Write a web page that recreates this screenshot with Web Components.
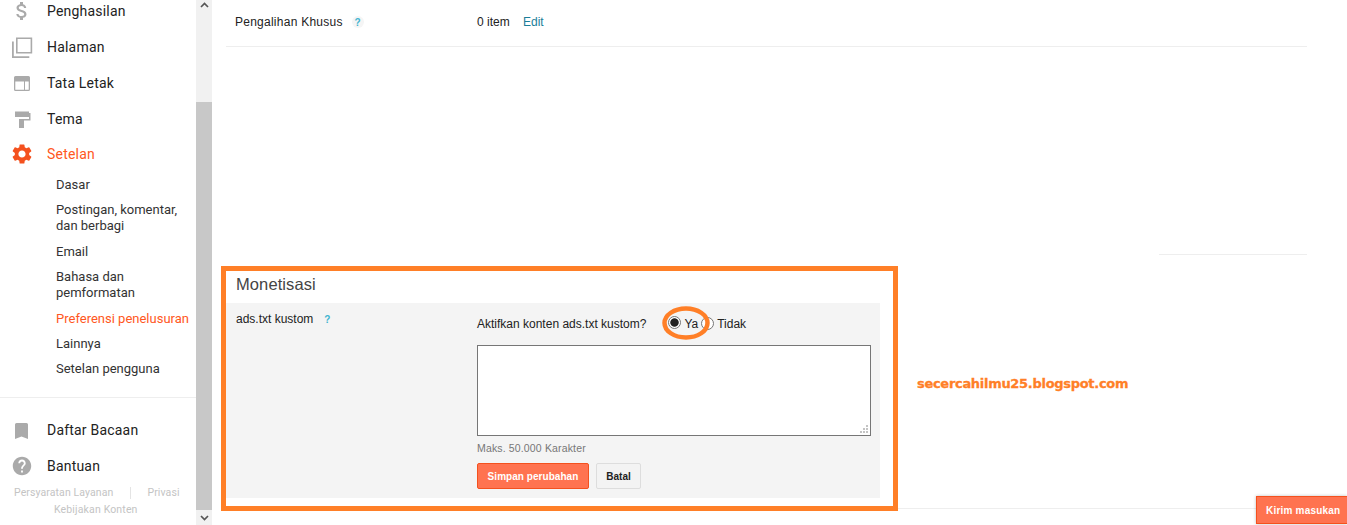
<!DOCTYPE html>
<html lang="id">
<head>
<meta charset="UTF-8">
<title>Setelan - Monetisasi</title>
<style>
    html, body { margin: 0; padding: 0; background: #fff; }
    body { height: 525px; overflow: hidden; position: relative; }
</style>
</head>
<body>
<blog-page>
    <side-nav slot="side">
        <nav-item label="Penghasilan"><svg viewBox="0 0 24 24"><path fill="#aaa" d="M11.8 10.9c-2.27-.59-3-1.2-3-2.15 0-1.09 1.01-1.85 2.7-1.85 1.78 0 2.44.85 2.5 2.1h2.21c-.07-1.72-1.12-3.3-3.21-3.81V3h-3v2.16c-1.94.42-3.5 1.68-3.5 3.61 0 2.31 1.91 3.46 4.7 4.13 2.5.6 3 1.48 3 2.41 0 .69-.49 1.79-2.7 1.79-2.06 0-2.87-.92-2.98-2.1h-2.2c.12 2.19 1.76 3.42 3.68 3.83V21h3v-2.15c1.95-.37 3.5-1.5 3.5-3.55 0-2.84-2.43-3.81-4.7-4.4z"/></svg></nav-item>
        <nav-item label="Halaman"><svg viewBox="0 0 24 24"><path fill="none" stroke="#aaa" stroke-width="1.6" d="M6.8 3.3h14.6v14.4H6.8z"/><path fill="none" stroke="#aaa" stroke-width="1.8" d="M2.9 6.500v15.700h16.400"/></svg></nav-item>
        <nav-item label="Tata Letak"><svg viewBox="0 0 24 24"><path fill="#aaa" d="M5.500 5h13a1.500 1.500 0 0 1 1.500 1.500v12a1.500 1.500 0 0 1-1.500 1.500h-13A1.500 1.500 0 0 1 4 18.500v-12A1.500 1.500 0 0 1 5.500 5z"/><path fill="#fff" d="M5.300 10.500h8.700v8.200H5.300zM15 10.500h3.700v8.200H15z"/></svg></nav-item>
        <nav-item label="Tema"><svg viewBox="0 0 24 24"><path fill="#aaa" d="M5 4.500h14V10H5zM19 6h1.500v7.500H14V21H9v-9h10z"/></svg></nav-item>
        <nav-item label="Setelan" active><svg viewBox="0 0 24 24"><path fill="#f4511e" d="M19.140 12.940c.04-.3.06-.61.06-.94 0-.32-.02-.64-.07-.94l2.030-1.580a.49.49 0 0 0 .12-.61l-1.920-3.320a.488.488 0 0 0-.59-.22l-2.390.96c-.5-.38-1.030-.7-1.620-.94l-.36-2.540a.484.484 0 0 0-.48-.41h-3.840c-.24 0-.43.17-.47.41l-.36 2.540c-.59.24-1.130.57-1.620.94l-2.390-.96c-.22-.08-.47 0-.59.22L2.740 8.870c-.12.21-.08.47.12.61l2.030 1.580c-.05.3-.09.63-.09.94s.02.64.07.94l-2.030 1.580a.49.49 0 0 0-.12.61l1.920 3.320c.12.22.37.29.59.22l2.390-.96c.5.38 1.030.7 1.620.94l.36 2.540c.05.24.24.41.48.41h3.840c.24 0 .44-.17.47-.41l.36-2.540c.59-.24 1.130-.56 1.620-.94l2.390.96c.22.08.47 0 .59-.22l1.920-3.320c.12-.22.07-.47-.12-.61l-2.010-1.580zM12 15.600c-1.980 0-3.600-1.620-3.600-3.600s1.620-3.600 3.600-3.600 3.600 1.620 3.600 3.600-1.620 3.600-3.600 3.600z"/></svg></nav-item>
        <sub-nav slot="sub">
            <sub-item>Dasar</sub-item>
            <sub-item>Postingan, komentar,<br>dan berbagi</sub-item>
            <sub-item>Email</sub-item>
            <sub-item>Bahasa dan<br>pemformatan</sub-item>
            <sub-item active>Preferensi penelusuran</sub-item>
            <sub-item>Lainnya</sub-item>
            <sub-item>Setelan pengguna</sub-item>
        </sub-nav>
        <nav-item slot="bottom" label="Daftar Bacaan"><svg viewBox="0 0 24 24"><path fill="#aaa" d="M6.500 5h10A1.500 1.500 0 0 1 18 6.500V21l-6.500-2.500L5 21V6.500A1.500 1.500 0 0 1 6.500 5z"/></svg></nav-item>
        <nav-item slot="bottom" label="Bantuan"><svg viewBox="-1 -1 26 26"><path fill="#aaa" d="M12 2C6.480 2 2 6.480 2 12s4.480 10 10 10 10-4.480 10-10S17.520 2 12 2zm1 17h-2v-2h2v2zm2.070-7.750l-.9.92C13.450 12.900 13 13.500 13 15h-2v-.5c0-1.100.45-2.100 1.170-2.830l1.240-1.260c.37-.36.59-.86.59-1.410 0-1.100-.9-2-2-2s-2 .9-2 2H8c0-2.210 1.790-4 4-4s4 1.790 4 4c0 .88-.36 1.680-.93 2.250z"/></svg></nav-item>
        <side-footer slot="bottom"></side-footer>
    </side-nav>
    <fake-scrollbar slot="scroll"></fake-scrollbar>
    <settings-main slot="main"></settings-main>
</blog-page>
<photo-annotations></photo-annotations>
<feedback-button>Kirim masukan</feedback-button>

<script>
    class BlogPage extends HTMLElement {
        constructor() {
            super();
            this.attachShadow({ mode: "open" }).innerHTML = `<style>
                :host { display: flex; height: 525px; overflow: hidden; }
                .side { flex: 0 0 196px; overflow: hidden; }
                .scroll { flex: 0 0 16px; display: flex; }
                .main { flex: 1; min-width: 0; }
            </style>
            <div class="side"><slot name="side"></slot></div>
            <div class="scroll"><slot name="scroll"></slot></div>
            <div class="main"><slot name="main"></slot></div>`;
        }
    }

    class SideNav extends HTMLElement {
        constructor() {
            super();
            this.attachShadow({ mode: "open" }).innerHTML = `<style>
                :host { display: block; margin-top: -7px; font-family: Roboto, sans-serif; }
                .sub { height: 225px; box-sizing: border-box; }
                .bottom { border-top: 1px solid #eee; padding-top: 14px; }
            </style>
            <div><slot></slot></div>
            <div class="sub"><slot name="sub"></slot></div>
            <div class="bottom"><slot name="bottom"></slot></div>`;
        }
    }

    class NavItem extends HTMLElement {
        constructor() {
            super();
            this.attachShadow({ mode: "open" }).innerHTML = `<style>
                :host { display: flex; align-items: center; height: 36px; padding-left: 10px; color: #222; font-size: 14px; letter-spacing: .2px; }
                :host([active]) { color: #ff5722; margin-top: -1px; }
                .icon { flex: 0 0 24px; height: 24px; margin-right: 13px; }
                ::slotted(svg) { display: block; width: 24px; height: 24px; }
            </style>
            <span class="icon"><slot></slot></span><span>${this.getAttribute("label")}</span>`;
        }
    }

    class SubNav extends HTMLElement {
        constructor() {
            super();
            this.attachShadow({ mode: "open" }).innerHTML = `<style>
                :host { display: flex; flex-direction: column; gap: 9.4px; padding: 5px 0 0 56px; }
            </style><slot></slot>`;
        }
    }

    class SubItem extends HTMLElement {
        constructor() {
            super();
            this.attachShadow({ mode: "open" }).innerHTML = `<style>
                :host { display: block; font-size: 13px; line-height: 16px; color: #333; white-space: nowrap; }
                :host([active]) { color: #ff5722; }
            </style><slot></slot>`;
        }
    }

    class SideFooter extends HTMLElement {
        constructor() {
            super();
            this.attachShadow({ mode: "open" }).innerHTML = `<style>
                :host { display: block; font-size: 10.5px; line-height: 17px; color: #c4c4c4; letter-spacing: .1px; }
                .line { display: flex; align-items: center; padding-left: 14px; }
                .bar { width: 1px; height: 12px; background: #e4e4e4; margin: 0 16px 0 17px; }
                .center { padding-left: 54px; letter-spacing: .15px; }
            </style>
            <div class="line"><span>Persyaratan Layanan</span><span class="bar"></span><span>Privasi</span></div>
            <div class="center">Kebijakan Konten</div>`;
        }
    }

    class FakeScrollbar extends HTMLElement {
        constructor() {
            super();
            this.attachShadow({ mode: "open" }).innerHTML = `<style>
                :host { flex: 1; display: flex; flex-direction: column; background: #f1f1f1; height: 525px; }
                .btn { height: 15px; display: flex; align-items: center; justify-content: center; flex: none; }
                .gap { height: 90px; flex: none; }
                .thumb { flex: 1; background: #c8c8c8; }
                svg { width: 9px; height: 6px; display: block; }
            </style>
            <div class="btn" style="height:10px;align-items:flex-start;padding-top:2px"><svg viewBox="0 0 9 6"><path d="M1 5l3.500-3.500L8 5" fill="none" stroke="#555" stroke-width="1.700"/></svg></div>
            <div class="gap"></div>
            <div class="thumb"></div>
            <div class="btn"><svg viewBox="0 0 9 6"><path d="M1 1l3.500 3.500L8 1" fill="none" stroke="#555" stroke-width="1.700"/></svg></div>`;
        }
    }

    class HelpDot extends HTMLElement {
        constructor() {
            super();
            this.attachShadow({ mode: "open" }).innerHTML = `<style>
                :host { display: inline-flex; align-items: center; justify-content: center; width: 12px; height: 12px; border-radius: 50%; background: #f5f5f5; color: #3fb4d0; font: bold 10px "Liberation Sans", Arial, sans-serif; }
            </style>?`;
        }
    }

    class RadioDot extends HTMLElement {
        constructor() {
            super();
            this.attachShadow({ mode: "open" }).innerHTML = `<style>
                :host { display: inline-block; box-sizing: border-box; width: 13px; height: 13px; border: 1px solid #767676; border-radius: 50%; background: #fff; position: relative; }
                :host([checked]) { background: radial-gradient(circle, #222 0, #222 3.800px, #fff 4.600px); }
            </style>`;
        }
    }

    class ActionButton extends HTMLElement {
        constructor() {
            super();
            this.attachShadow({ mode: "open" }).innerHTML = `<style>
                :host { display: inline-flex; align-items: center; justify-content: center; box-sizing: border-box; height: 26px; padding: 0 10px; border: 1px solid #ddd; border-radius: 2px; background: #f3f3f3; color: #222; font: bold 10px "Liberation Sans", Arial, sans-serif; letter-spacing: .05px; white-space: nowrap; }
                :host([primary]) { background: #ff7350; border-color: #f4511e; color: #fff; }
            </style><slot></slot>`;
        }
    }

    class SettingsMain extends HTMLElement {
        constructor() {
            super();
            this.attachShadow({ mode: "open" }).innerHTML = `<style>
                :host { display: block; width: 1081px; margin-left: 14px; font: 12px "Liberation Sans", Arial, sans-serif; color: #222; }
                .row { display: grid; grid-template-columns: 251px 1fr; height: 44px; padding-bottom: 2px; align-items: center; border-bottom: 1px solid #eee; }
                .label { padding-left: 9px; display: flex; align-items: center; gap: 9px; }
                .row .label { letter-spacing: .25px; }
                .value a { color: #1b7e99; margin-left: 10px; text-decoration: none; }
                .spacer { height: 208px; display: flex; justify-content: flex-end; align-items: flex-end; }
                .spacer i { display: block; width: 148px; height: 1px; background: #eee; }
                h2 { margin: 0; height: 48px; box-sizing: border-box; padding: 17px 0 0 10px; font: 16.5px/24px "Liberation Sans", Arial, sans-serif; color: #444; letter-spacing: .1px; }
                .panel { width: 654px; height: 195px; background: #f4f4f4; display: grid; grid-template-columns: 251px 394px; box-sizing: border-box; padding-top: 9px; }
                .panel .label { align-self: start; padding-left: 10px; gap: 8px; height: 14px; }
                .panel help-dot { background: transparent; }
                .ask { display: flex; align-items: center; height: 22px; margin-top: 1px; white-space: nowrap; }
                .ask span.q { margin-right: 22px; }
                .ask .r1 { top: -2px; }
                .ask .r2 { margin-left: 3px; top: -1px; }
                .ask .t { margin-left: 3px; }
                .box { position: relative; height: 91px; margin-top: 10px; }
                textarea { display: block; width: 100%; height: 100%; box-sizing: border-box; border: 1px solid #767676; background: #fff; resize: none; margin: 0; padding: 2px; outline: none; }
                .grip { position: absolute; right: 3px; bottom: 3px; width: 8px; height: 8px; }
                .hint { color: #777; font-size: 10.5px; line-height: 14px; margin-top: 5px; letter-spacing: .15px; }
                .actions { display: flex; gap: 7px; margin-top: 8px; }
                .actions .p { width: 112px; padding: 0; }
                .actions .c { width: 45px; padding: 0; }
                .end { margin-top: 10px; height: 1px; background: #eee; }
            </style>
            <div class="row">
                <div class="label">Pengalihan Khusus <help-dot></help-dot></div>
                <div class="value">0 item <a>Edit</a></div>
            </div>
            <div class="spacer"><i></i></div>
            <h2>Monetisasi</h2>
            <div class="panel">
                <div class="label">ads.txt kustom <help-dot></help-dot></div>
                <div>
                    <div class="ask">
                        <span class="q">Aktifkan konten ads.txt kustom?</span>
                        <radio-dot class="r1" checked></radio-dot><span class="t">Ya</span>
                        <radio-dot class="r2"></radio-dot><span class="t">Tidak</span>
                    </div>
                    <div class="box">
                        <textarea></textarea>
                        <svg class="grip" viewBox="0 0 8 8"><path fill="#c4c4c4" d="M6 0h2v2H6zM3 3h2v2H3zM6 3h2v2H6zM0 6h2v2H0zM3 6h2v2H3zM6 6h2v2H6z"/></svg>
                    </div>
                    <div class="hint">Maks. 50.000 Karakter</div>
                    <div class="actions">
                        <action-button primary class="p">Simpan perubahan</action-button>
                        <action-button class="c">Batal</action-button>
                    </div>
                </div>
            </div>
            <div class="end"></div>`;
        }
    }

    // pen marks drawn on top of the screenshot, they sit free over the page
    class PhotoAnnotations extends HTMLElement {
        constructor() {
            super();
            this.attachShadow({ mode: "open" }).innerHTML = `<style>
                :host { display: block; position: absolute; left: 0; top: 0; width: 1347px; height: 525px; pointer-events: none; }
                .frame { position: absolute; left: 221px; top: 266px; width: 677px; height: 245px; box-sizing: border-box; border: 5px solid #ff7f27; }
                svg { position: absolute; left: 660px; top: 304px; width: 52px; height: 38px; }
                .mark { position: absolute; left: 917px; top: 376px; font: bold 13px/16px "DejaVu Sans", sans-serif; letter-spacing: -.3px; color: #ff7f27; white-space: nowrap; -webkit-text-stroke: .3px #ff7f27; }
            </style>
            <div class="frame"></div>
            <svg viewBox="0 0 52 38"><ellipse cx="26" cy="19" rx="21.5" ry="14.5" fill="none" stroke="#ff7f27" stroke-width="4.5"/></svg>
            <div class="mark">secercahilmu25.blogspot.com</div>`;
        }
    }

    class FeedbackButton extends HTMLElement {
        constructor() {
            super();
            this.attachShadow({ mode: "open" }).innerHTML = `<style>
                :host { position: absolute; right: 0; top: 496px; box-sizing: border-box; width: 91px; height: 28px; display: flex; align-items: center; padding-left: 9px; background: #ff7350; border: 1px solid #f4511e; border-right: none; color: #fff; font: bold 10px "Liberation Sans", Arial, sans-serif; letter-spacing: .2px; white-space: nowrap; box-shadow: 0 0 3px rgba(0,0,0,.25); }
            </style><slot></slot>`;
        }
    }

    customElements.define("blog-page", BlogPage);
    customElements.define("side-nav", SideNav);
    customElements.define("nav-item", NavItem);
    customElements.define("sub-nav", SubNav);
    customElements.define("sub-item", SubItem);
    customElements.define("side-footer", SideFooter);
    customElements.define("fake-scrollbar", FakeScrollbar);
    customElements.define("help-dot", HelpDot);
    customElements.define("radio-dot", RadioDot);
    customElements.define("action-button", ActionButton);
    customElements.define("settings-main", SettingsMain);
    customElements.define("photo-annotations", PhotoAnnotations);
    customElements.define("feedback-button", FeedbackButton);
</script>
</body>
</html>
